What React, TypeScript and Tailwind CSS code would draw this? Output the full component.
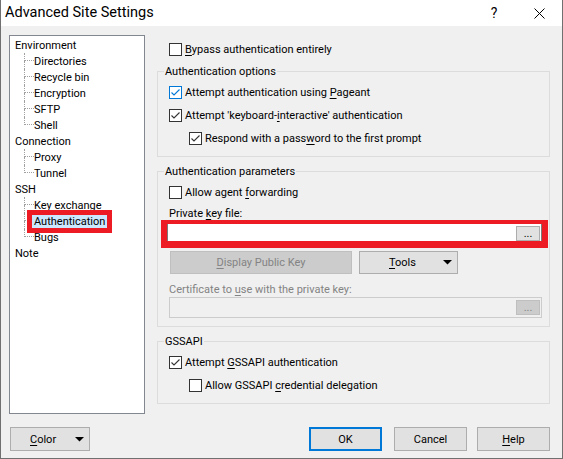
import type { ReactNode } from "react";
import { clsx } from "clsx";

type TreeNode = { label: string; children?: string[] };

const tree: TreeNode[] = [
  { label: "Environment", children: ["Directories", "Recycle bin", "Encryption", "SFTP", "Shell"] },
  { label: "Connection", children: ["Proxy", "Tunnel"] },
  { label: "SSH", children: ["Key exchange", "Authentication", "Bugs"] },
  { label: "Note" },
];

const selected = "Authentication";

function U({ children }: { children: ReactNode }) {
  return <span className="underline decoration-1 underline-offset-2">{children}</span>;
}

function Arrow() {
  return (
    <svg width="9" height="5" viewBox="0 0 9 5" className="ml-auto shrink-0">
      <polygon points="0,0 9,0 4.5,4.6" fill="#000" />
    </svg>
  );
}

function Box({ checked, hot }: { checked?: boolean; hot?: boolean }) {
  const stroke = hot ? "#0078d7" : "#333333";
  return (
    <span
      className={clsx(
        "flex h-[13px] w-[13px] shrink-0 items-center justify-center border bg-white",
        hot ? "border-[#0078d7]" : "border-[#333333]"
      )}
    >
      {checked && (
        <svg width="11" height="11" viewBox="0 0 11 11">
          <path d="M1.5 5.5 L4 8 L9.5 2.5" fill="none" stroke={stroke} strokeWidth="1.1" />
        </svg>
      )}
    </span>
  );
}

function Check({
  label,
  checked,
  hot,
  indent
}: {
  label: ReactNode;
  checked?: boolean;
  hot?: boolean;
  indent?: boolean;
}) {
  return (
    <div className={clsx("flex h-[16px] items-center", indent && "ml-[20px]")}>
      <Box checked={checked} hot={hot} />
      <span className="ml-[3px] whitespace-nowrap pt-[2px]">{label}</span>
    </div>
  );
}

function Group({ title, className, children }: { title: string; className?: string; children: ReactNode }) {
  return (
    <div className={clsx("relative flex flex-col border border-[#dcdcdc] pl-[11px] pt-[12px]", className)}>
      <span className="absolute left-[6px] top-[-8px] bg-[#f0f0f0] px-[1px] leading-[16px]">{title}</span>
      {children}
    </div>
  );
}

function Ellipsis({ disabled }: { disabled?: boolean }) {
  return (
    <span
      className={clsx(
        "flex h-[15px] w-[24px] items-center justify-center border leading-[13px]",
        disabled ? "border-[#bfbfbf] bg-[#cccccc] text-[#838383]" : "border-[#adadad] bg-[#e1e1e1]"
      )}
    >
      ...
    </span>
  );
}

function Branch({ last }: { last: boolean }) {
  return (
    <span className="flex h-[16px] w-[10px] shrink-0 flex-col">
      <span className="h-[8px] border-b border-l border-dotted border-[#a0a0a0]" />
      {!last && <span className="h-[8px] border-l border-dotted border-[#a0a0a0]" />}
    </span>
  );
}

function Tree() {
  return (
    <div className="h-[379px] w-[136px] shrink-0 border border-[#828790] bg-white pl-[5px] pt-[1px]">
      {tree.map((node) => (
        <div key={node.label}>
          <div className="h-[16px] whitespace-nowrap pt-[1px]">{node.label}</div>
          {node.children?.map((child, i) => (
            <div key={child} className="flex h-[16px] items-center pl-[9px]">
              <Branch last={i === node.children!.length - 1} />
              {child === selected ? (
                <span className="-ml-[2px] flex h-[13px] items-center whitespace-nowrap bg-[#cce8ff] px-[2px] pt-[1px] outline-[5px] outline-solid outline-[#ed1c24]">
                  {child}
                </span>
              ) : (
                <span className="whitespace-nowrap pt-[2px]">{child}</span>
              )}
            </div>
          ))}
        </div>
      ))}
    </div>
  );
}

function Settings() {
  return (
    <div className="flex w-[393px] flex-col">
      <div className="mt-[6px] pl-[12px]">
        <Check label={<><U>B</U>ypass authentication entirely</>} />
      </div>

      <Group title="Authentication options" className="mt-[14px] h-[86px] gap-[7px]">
        <Check checked hot label={<>Attempt authentication using <U>P</U>ageant</>} />
        <Check checked label={<>Attempt 'keyboard-<U>i</U>nteractive' authentication</>} />
        <Check checked indent label={<>Respond with a pass<U>w</U>ord to the first prompt</>} />
      </Group>

      <Group title="Authentication parameters" className="mt-[14px] h-[156px]">
        <Check label={<>Allow agent <U>f</U>orwarding</>} />
        <div className="mt-[6px] h-[14px] pt-[1px] leading-[14px]">
          Private <U>k</U>ey file:
        </div>
        <div className="-ml-[8px] w-[387px] border-b-[7px] border-l-[6px] border-r-[6px] border-t-[4px] border-[#ed1c24]">
          <div className="flex h-[17px] justify-end border-x border-[#7a7a7a] bg-white pr-[1px] pt-[2px]">
            <Ellipsis />
          </div>
        </div>
        <div className="mt-[3px] flex">
          <button
            type="button"
            disabled
            className="ml-[1px] flex h-[23px] w-[182px] items-center justify-center border border-[#bfbfbf] bg-[#cccccc] pt-[1px] text-[#838383]"
          >
            <U>D</U>isplay Public Key
          </button>
          <button
            type="button"
            className="ml-[7px] flex h-[23px] w-[99px] items-center border border-[#adadad] bg-[#e1e1e1] pl-[29px] pr-[5px]"
          >
            <span className="pt-[1px]"><U>T</U>ools</span>
            <Arrow />
          </button>
        </div>
        <div className="mt-[7px] h-[15px] pt-[1px] leading-[15px] text-[#838383]">
          Certificate to <U>u</U>se with the private key:
        </div>
        <div className="mt-[1px] flex h-[21px] w-[373px] justify-end border border-[#cccccc] bg-[#f0f0f0] pr-[1px] pt-[2px]">
          <Ellipsis disabled />
        </div>
      </Group>

      <Group title="GSSAPI" className="mt-[14px] h-[63px] gap-[7px]">
        <Check checked label={<>Attempt <U>G</U>SSAPI authentication</>} />
        <Check indent label={<>Allow GSSAPI <U>c</U>redential delegation</>} />
      </Group>
    </div>
  );
}

export default function App() {
  return (
    <div className="flex h-[459px] w-[563px] flex-col border-x border-b border-[#707070] bg-[#f0f0f0] font-['Roboto',sans-serif] text-[11px] leading-[16px] text-black">
      <div className="flex h-[26px] shrink-0 items-center bg-white">
        <span className="pl-[4px] text-[14.5px] leading-[20px]">Advanced Site Settings</span>
        <span className="ml-auto flex h-full w-[46px] items-center justify-center text-[14px]">?</span>
        <span className="flex h-full w-[45px] items-center justify-center">
          <svg width="11" height="11" viewBox="0 0 11 11">
            <path d="M0.5 0.5 L10.5 10.5 M10.5 0.5 L0.5 10.5" stroke="#000" strokeWidth="1" />
          </svg>
        </span>
      </div>

      <div className="flex flex-col pl-[8px] pr-[12px] pt-[9px]">
        <div className="flex gap-[12px]">
          <Tree />
          <Settings />
        </div>

        <div className="mt-[13px] flex">
          <button
            type="button"
            className="ml-[1px] flex h-[24px] w-[80px] items-center border border-[#adadad] bg-[#e1e1e1] pl-[19px] pr-[5px]"
          >
            <span className="pt-[1px]"><U>C</U>olor</span>
            <Arrow />
          </button>
          <button
            type="button"
            className="ml-auto flex h-[24px] w-[73px] items-center justify-center border-2 border-[#0078d7] bg-[#e1e1e1] pt-[1px]"
          >
            OK
          </button>
          <button
            type="button"
            className="ml-[12px] flex h-[24px] w-[73px] items-center justify-center border border-[#adadad] bg-[#e1e1e1] pt-[1px]"
          >
            Cancel
          </button>
          <button
            type="button"
            className="ml-[10px] flex h-[24px] w-[73px] items-center justify-center border border-[#adadad] bg-[#e1e1e1] pt-[1px]"
          >
            <U>H</U>elp
          </button>
        </div>
      </div>
    </div>
  );
}
